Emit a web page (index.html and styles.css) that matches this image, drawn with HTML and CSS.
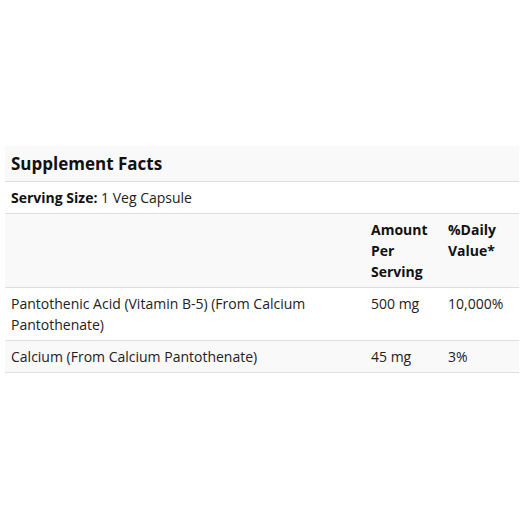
FILE: index.html
```html
<!DOCTYPE html>
<html>
<head>
<meta charset="utf-8">
<link rel="stylesheet" href="styles.css">
</head>
<body>
<div class="facts">
  <div class="title">Supplement Facts</div>
  <table class="facts-table">
    <colgroup>
      <col class="c1">
      <col class="c2">
      <col class="c3">
    </colgroup>
    <tr class="serving">
      <td colspan="3"><b>Serving Size:</b> 1 Veg Capsule</td>
    </tr>
    <tr class="head shade">
      <th></th>
      <th>Amount Per Serving</th>
      <th>%Daily Value*</th>
    </tr>
    <tr>
      <td>Pantothenic Acid (Vitamin B-5) (From Calcium Pantothenate)</td>
      <td>500 mg</td>
      <td>10,000%</td>
    </tr>
    <tr class="shade">
      <td>Calcium (From Calcium Pantothenate)</td>
      <td>45 mg</td>
      <td>3%</td>
    </tr>
  </table>
</div>
</body>
</html>
```
FILE: styles.css
```css
html, body {
  margin: 0;
  padding: 0;
  background: #ffffff;
}
body {
  font-family: "Open Sans", "Noto Sans", sans-serif;
  font-size: 14px;
  line-height: 21px;
  color: #222222;
}
.facts {
  margin: 146px 7px 0 5px;
  width: 514px;
}
.title {
  background: #f9f9f9;
  font-size: 17px;
  font-weight: 700;
  line-height: 24px;
  padding: 6px 6px 5px 6px;
  border-bottom: 1px solid #dedede;
  color: #111111;
}
.facts-table {
  width: 100%;
  border-collapse: collapse;
  table-layout: fixed;
}
.facts-table td,
.facts-table th {
  padding: 5px 6px 5px 6px;
  border-bottom: 1px solid #dedede;
  text-align: left;
  vertical-align: top;
}
.facts-table th {
  font-weight: 700;
  color: #111111;
}
.facts-table b {
  color: #111111;
}
.shade {
  background: #f9f9f9;
}
.c1 { width: 360px; }
.c2 { width: 77px; }
.c3 { width: 77px; }
```
